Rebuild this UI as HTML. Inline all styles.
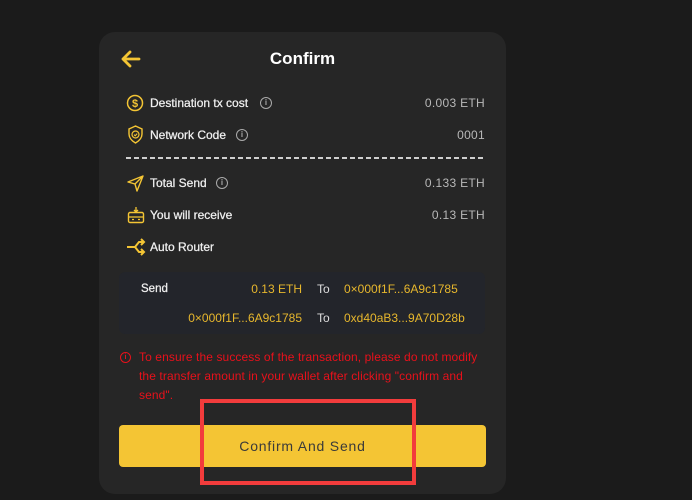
<!DOCTYPE html>
<html><head><style>
body{margin:0;width:692px;height:500px;background:#1b1b1b;font-family:"Liberation Sans",sans-serif;position:relative;overflow:hidden}
.card{position:absolute;left:99px;top:32px;width:407px;height:462px;background:#262626;border-radius:16px}
.a{position:absolute}
.t{position:absolute;color:#f0f0f0;font-size:12px;transform:translateY(-50%);-webkit-text-stroke:0.25px #f0f0f0}
.v{position:absolute;right:207px;color:#b8b8b8;font-size:12px;transform:translateY(-50%);letter-spacing:.3px}
.info{position:absolute;width:10px;height:10px;border:1.3px solid #aaa;border-radius:50%;transform:translateY(-50%);color:#aaa;font-size:8px;text-align:center;line-height:10px;font-weight:bold}
.y{color:#e7b72d;font-size:12px;position:absolute;transform:translateY(-50%)}
</style></head><body>
<div class="card"></div>
<svg class="a" style="left:120px;top:49px" width="22" height="20" viewBox="0 0 22 20"><path d="M19 10H3M10 3L3 10L10 17" stroke="#f4c534" stroke-width="2.8" fill="none" stroke-linecap="round" stroke-linejoin="round"/></svg>
<div class="a" style="left:0;width:605px;text-align:center;top:49px;color:#fff;font-size:17px;font-weight:bold">Confirm</div>

<svg class="a" style="left:126px;top:94px" width="18" height="18"><circle cx="9" cy="9" r="7.5" stroke="#f4c534" stroke-width="1.5" fill="none"/><text x="9" y="13" text-anchor="middle" font-size="11" fill="#f4c534" font-family="Liberation Sans" font-weight="bold">$</text></svg>
<div class="t" style="left:150px;top:103px">Destination tx cost</div><div class="info" style="left:260px;top:103px">i</div>
<div class="v" style="top:103px">0.003 ETH</div>

<svg class="a" style="left:127px;top:125px" width="17" height="19"><path d="M8.5 1L15 4V9C15 13 12 16 8.5 18C5 16 2 13 2 9V4Z" stroke="#f4c534" stroke-width="1.4" fill="none"/><circle cx="8.5" cy="9.5" r="3.5" stroke="#f4c534" stroke-width="1.2" fill="none"/><path d="M7 9.6L8.2 10.8L10.2 8.6" stroke="#f4c534" stroke-width="1.1" fill="none"/></svg>
<div class="t" style="left:150px;top:135px">Network Code</div><div class="info" style="left:236px;top:135px">i</div>
<div class="v" style="top:135px">0001</div>

<div class="a" style="left:126px;top:157px;width:360px;height:1.5px;background:repeating-linear-gradient(90deg,#cfcfcf 0 5px,transparent 5px 8px)"></div>

<svg class="a" style="left:127px;top:175px" width="17" height="17"><path d="M1 7L16 1L10 16L8 9Z M8 9L16 1" stroke="#f4c534" stroke-width="1.4" fill="none" stroke-linejoin="round"/></svg>
<div class="t" style="left:150px;top:183px">Total Send</div><div class="info" style="left:216px;top:183px">i</div>
<div class="v" style="top:183px">0.133 ETH</div>

<svg class="a" style="left:127px;top:206px" width="18" height="18"><path d="M9 1V6M7 4L9 6L11 4" stroke="#f4c534" stroke-width="1.3" fill="none"/><rect x="1.5" y="6.5" width="15" height="10" rx="1.5" stroke="#f4c534" stroke-width="1.4" fill="none"/><path d="M1.5 11H16.5M5 13.5H7M11 13.5H13" stroke="#f4c534" stroke-width="1.3"/></svg>
<div class="t" style="left:150px;top:215px">You will receive</div>
<div class="v" style="top:215px">0.13 ETH</div>

<svg class="a" style="left:126px;top:238px" width="20" height="18"><path d="M1 9H9L13 4H18M15 1L18 4L15 7M9 9L13 14H18M15 11L18 14L15 17" stroke="#f4c534" stroke-width="2" fill="none"/></svg>
<div class="t" style="left:150px;top:247px">Auto Router</div>

<div class="a" style="left:119px;top:272px;width:366px;height:62px;background:#23252b;border-radius:6px"></div>
<div class="t" style="left:141px;top:289px;font-size:11.5px">Send</div>
<div class="y" style="right:390px;top:289px">0.13 ETH</div>
<div class="t" style="left:317px;top:289px;color:#ddd;-webkit-text-stroke:0">To</div>
<div class="y" style="left:344px;top:289px">0×000f1F...6A9c1785</div>
<div class="y" style="right:390px;top:318px">0×000f1F...6A9c1785</div>
<div class="t" style="left:317px;top:318px;color:#ddd;-webkit-text-stroke:0">To</div>
<div class="y" style="left:344px;top:318px">0xd40aB3...9A70D28b</div>

<div class="a" style="left:120px;top:352px;width:9px;height:9px;border:1.3px solid #e8111b;border-radius:50%;color:#e8111b;font-size:7px;text-align:center;line-height:9px;font-weight:bold">i</div>
<div class="a" style="left:139px;top:348px;width:346px;color:#e8111b;font-size:12px;letter-spacing:0.1px;line-height:19px">To ensure the success of the transaction, please do not modify the transfer amount in your wallet after clicking "confirm and send".</div>

<div class="a" style="left:119px;top:425px;width:367px;height:42px;background:#f4c534;border-radius:4px;text-align:center;line-height:42px;color:#3a3a3a;font-size:14px;letter-spacing:.8px">Confirm And Send</div>
<div class="a" style="left:200px;top:399px;width:208px;height:78px;border:4px solid #f23c3c"></div>
</body></html>
